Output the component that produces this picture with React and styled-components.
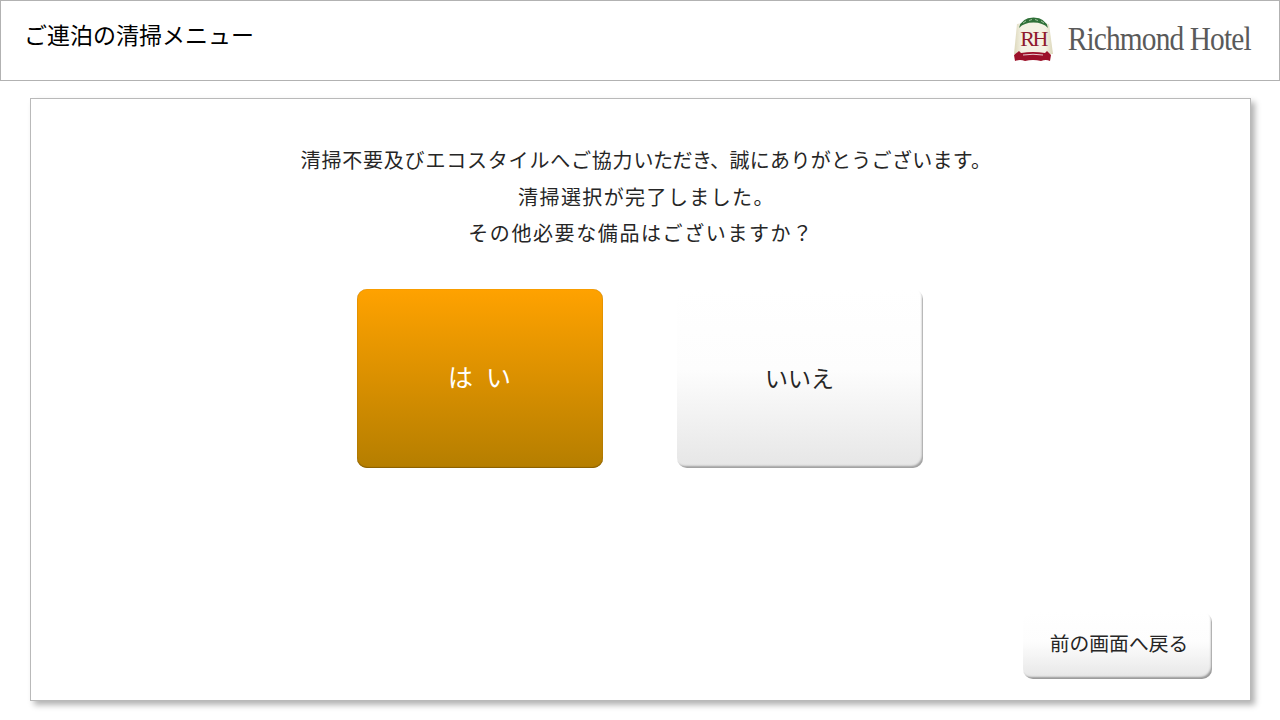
import React from 'react';
import styled, { createGlobalStyle } from 'styled-components';

const GlobalStyle = createGlobalStyle`
  html, body {
    margin: 0;
    padding: 0;
    background: #fff;
  }
  body {
    font-family: "Liberation Sans", "Noto Sans CJK JP", sans-serif;
  }
`;

const Crest = () => (
  <CrestSvg width="42" height="46" viewBox="0 0 42 46">
    <defs>
      <linearGradient id="scroll" x1="0" y1="0" x2="1" y2="0">
        <stop offset="0" stopColor="#dcd7ba" />
        <stop offset="0.2" stopColor="#f4f2e4" />
        <stop offset="0.8" stopColor="#f4f2e4" />
        <stop offset="1" stopColor="#dcd7ba" />
      </linearGradient>
    </defs>
    <path d="M5 7 Q21 3 37 7 L41 37 L2 37 Z" fill="url(#scroll)" />
    <path d="M7 11 Q9 1 21.5 0.5 Q34 1 36 11 Q31 5.5 21.5 5.5 Q12 5.5 7 11 Z" fill="#2f7038" />
    <path d="M11 6 L14 4 M17 3.5 L20 2.5 M23 2.5 L26 3.5 M29 4 L32 6" stroke="#b9d4b4" strokeWidth="0.8" />
    <text x="21" y="29" textAnchor="middle" fontFamily="Liberation Serif, serif" fontSize="22" letterSpacing="-2.5" fill="#8f1a2e">
      RH
    </text>
    <path d="M2 38 L7 34 L9 36 Q21 34 33 36 L35 34 L39 38 L38 44 Q34 42 29 44 Q21 42 13 44 Q8 42 3 44 Z" fill="#9c1129" />
    <path d="M11 38 Q21 36.5 31 38" stroke="#e9cdd0" strokeWidth="1" fill="none" />
  </CrestSvg>
);

const App = () => (
  <Page>
    <GlobalStyle />
    <Header>
      <Title>ご連泊の清掃メニュー</Title>
      <Logo>
        <Crest />
        <LogoText>Richmond Hotel</LogoText>
      </Logo>
    </Header>
    <Panel>
      <Message>
        <Line $spacing="0.8px" $inset="11px">
          清掃不要及びエコスタイルへご協力<Tight $spacing="-0.5px">いただき、</Tight>
          <Tight $spacing="0.3px">誠にありがとうございます。</Tight>
        </Line>
        <Line $spacing="1.4px" $inset="12px">清掃選択が完了しました。</Line>
        <Line $spacing="1.6px" $inset="1px">その他必要な備品はございますか？</Line>
      </Message>
      <Choices>
        <ChoiceButton $primary>は い</ChoiceButton>
        <ChoiceButton>いいえ</ChoiceButton>
      </Choices>
      <BackButton>前の画面へ戻る</BackButton>
    </Panel>
  </Page>
);

const Page = styled.div`
  width: 1280px;
  height: 720px;
  overflow: hidden;
  background: #fff;
`;

const Header = styled.header`
  box-sizing: border-box;
  height: 81px;
  border: 1px solid #b2b2b2;
  display: flex;
  align-items: flex-start;
  justify-content: space-between;
  padding: 15px 28px 0 23px;
`;

const Title = styled.h1`
  margin: 0;
  font-size: 23px;
  line-height: 40px;
  font-weight: 400;
  color: #000;
`;

const Logo = styled.div`
  display: flex;
  align-items: flex-start;
  gap: 13px;
`;

const CrestSvg = styled.svg`
  margin-top: 1px;
`;

const LogoText = styled.span`
  display: inline-block;
  margin-left: -28px;
  font-family: "Liberation Serif", serif;
  font-size: 34px;
  line-height: 46px;
  letter-spacing: -1px;
  color: #5a5a5a;
  white-space: nowrap;
  transform: scaleX(0.864);
  transform-origin: right center;
`;

const Panel = styled.main`
  box-sizing: border-box;
  width: 1221px;
  height: 603px;
  margin: 17px 0 0 30px;
  border: 1px solid #b9b9b9;
  box-shadow: 4px 4px 6px rgba(0, 0, 0, 0.3);
  background: #fff;
  display: flex;
  flex-direction: column;
  padding: 44px 38px 21px;
`;

const Message = styled.div`
  display: flex;
  flex-direction: column;
  align-items: center;
  color: #262626;
  font-size: 20px;
  line-height: 36.5px;
`;

const Line = styled.p`
  margin: 0;
  white-space: nowrap;
  letter-spacing: ${(p) => p.$spacing};
  padding-left: ${(p) => p.$inset || '0'};
`;

const Tight = styled.span`
  letter-spacing: ${(p) => p.$spacing};
`;

const Choices = styled.div`
  display: flex;
  justify-content: center;
  gap: 74px;
  margin-top: 36.5px;
  padding-right: 2px;
`;

const ChoiceButton = styled.button`
  box-sizing: border-box;
  width: 246px;
  height: 179px;
  border: none;
  border-radius: 10px;
  font-family: inherit;
  font-size: ${(p) => (p.$primary ? '25px' : '23px')};
  word-spacing: ${(p) => (p.$primary ? '6px' : '0')};
  padding: 0 0 ${(p) => (p.$primary ? '6px' : '4px')};
  white-space: pre;
  color: ${(p) => (p.$primary ? '#fff' : '#262626')};
  background: ${(p) =>
    p.$primary
      ? 'linear-gradient(#ffa200, #b57e00)'
      : 'linear-gradient(#fff 0%, #fdfdfd 45%, #e6e6e6 100%)'};
  box-shadow: ${(p) =>
    p.$primary
      ? 'inset 0 -1px 1px #8a6000, inset 0 0 1px rgba(120, 80, 0, 0.5)'
      : 'inset -2px -3px 2px -1px #a0a0a0'};
`;

const BackButton = styled.button`
  box-sizing: border-box;
  align-self: flex-end;
  width: 189px;
  height: 67px;
  margin-top: auto;
  border: none;
  border-radius: 10px;
  font-family: inherit;
  font-size: 19.8px;
  color: #262626;
  padding: 0 0 6px 3px;
  background: linear-gradient(#fff 0%, #fdfdfd 45%, #e6e6e6 100%);
  box-shadow: inset -2px -3px 2px -1px #989898;
`;

export default App;
